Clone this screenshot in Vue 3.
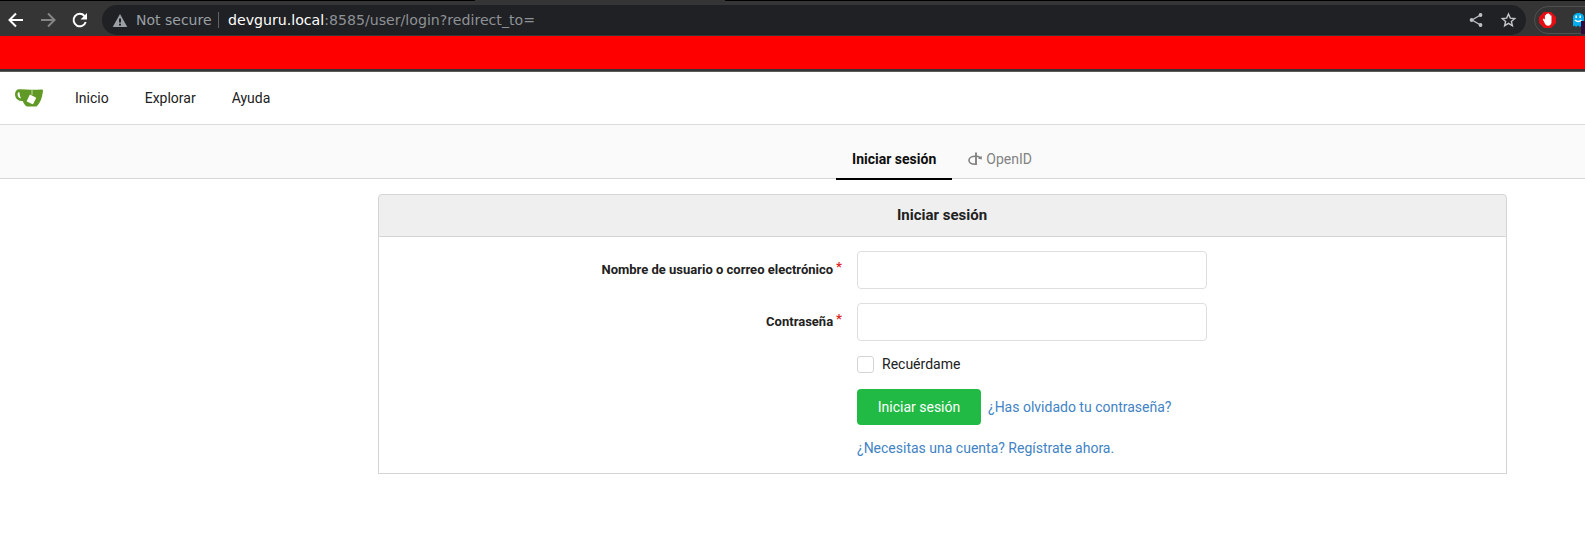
<script setup>
const nav = ['Inicio', 'Explorar', 'Ayuda']
const fields = [
  { id: 'user_name', label: 'Nombre de usuario o correo electrónico', type: 'text' },
  { id: 'password', label: 'Contraseña', type: 'password' },
]
</script>

<template>
  <div class="window">
    <div class="tabstrip"></div>
    <div class="toolbar">
      <svg class="nav-icons" width="102" height="34" viewBox="0 2 102 34" fill="none" stroke-width="2">
        <path d="M23 20H10M16 13.500L9.500 20l6.500 6.500" stroke="#fff" />
        <path d="M41 20H54M48 13.500L54.500 20L48 26.500" stroke="#858585" />
        <path d="M84.500 16A6.200 6.200 0 1 0 85.700 22" stroke="#fff" />
        <path d="M87 13v6.500h-6.500z" fill="#fff" />
      </svg>
      <div class="address">
        <svg class="warn" width="16" height="15" viewBox="0 0 16 15">
          <path d="M8 1L15.300 14H.7z" fill="#9aa0a6" />
          <path d="M7 5.500h2V9.500H7zM7 10.700h2v1.800H7z" fill="#202124" />
        </svg>
        <span class="insecure">Not secure</span>
        <span class="divider"></span>
        <span class="url"><b>devguru.local</b>:8585/user/login?redirect_to=</span>
        <svg class="page-actions" width="48" height="16" viewBox="0 0 48 16">
          <path d="M11.500 3L3 8l8.500 5" fill="none" stroke="#bdc1c6" stroke-width="1.300" />
          <circle cx="11.500" cy="3" r="1.900" fill="#bdc1c6" />
          <circle cx="2.600" cy="8" r="1.900" fill="#bdc1c6" />
          <circle cx="11.500" cy="13" r="1.900" fill="#bdc1c6" />
          <path d="M39.500 2l1.800 4.100 4.400.4-3.300 2.900 1 4.300-3.900-2.300-3.900 2.300 1-4.300-3.300-2.900 4.400-.4z" fill="none" stroke="#c4c7ca" stroke-width="1.400" />
        </svg>
      </div>
      <div class="extensions">
        <svg width="51" height="28" viewBox="0 0 51 28">
          <path d="M10 6h7l5 5v6l-5 5h-7l-5-5v-6z" fill="#e40d13" />
          <path d="M10.200 16l-1.500-2.600 1-.8 1.200 1V9.300h1.200V8h1.400v-.8h1.300V8.200h1.400v1.400h1.300v6.400c0 2-1 3.700-3.400 3.700-2 0-2.900-1.200-3.900-3.700z" fill="#fff" />
          <path d="M39 20.500V11.500c0-6 11-6 11 0v9l-2-1.500-2 2-2-1.500-2 1.500-1.500-1.500z" fill="#00aef0" />
          <path d="M42.200 9.500v2.500M46.200 9.500v2.500M41 14q3.200 3 6.500 0" fill="none" stroke="#fff" stroke-width="1.500" />
          <path d="M47 15h4v13h-4z" fill="#310b3d" />
        </svg>
      </div>
    </div>
    <div class="banner"></div>

    <nav class="navbar">
      <svg class="logo" width="28" height="18" viewBox="0 0 28 18">
        <path fill="#609926" fill-rule="evenodd" d="M3.500.3C1.200.8-.2 3 .1 6c.4 4 3.300 6 7.600 6 1 2.400 2.300 4.400 4 5.500h9.800C25 15 27.500 8 28 1.300 28 .5 27.500.3 26.500.4 19 1 12 .9 5.500.3zM4.300 3c.3 2.600.9 4.800 1.800 6.500C3.800 9 2.600 7.500 2.600 5.300c0-1.300.6-2.200 1.700-2.300z" />
        <path d="M17 .8v5" stroke="#c5dbad" />
        <path d="M14.900 5.600l5.500 2.600c.6.300.8.800.5 1.400l-2.500 5c-.3.600-.8.700-1.400.4l-4.600-2.200c-.6-.3-.7-.8-.4-1.400z" fill="#fff" />
      </svg>
      <a v-for="item in nav" :key="item">{{ item }}</a>
    </nav>

    <div class="tabs">
      <a class="tab active">Iniciar sesión</a>
      <a class="tab">
        <svg width="14" height="14" viewBox="0 0 14 14" fill="none" stroke="#828282">
          <path d="M7.500 4.200C3.500 4.200 1 5.800 1 8.300c0 2.400 2.500 4 6.500 4M8 4.200c1.800 0 3.200.6 4.200 1.300" stroke-width="1.600" />
          <path d="M8 .6v12.400" stroke-width="1.900" />
          <path d="M13.800 4v3.500L9.800 6.500z" fill="#828282" stroke="none" />
        </svg>
        OpenID
      </a>
    </div>

    <main class="card">
      <h4>Iniciar sesión</h4>
      <form class="form" @submit.prevent>
        <div v-for="f in fields" :key="f.id" class="field">
          <label :for="f.id">{{ f.label }}<i>*</i></label>
          <input :id="f.id" :type="f.type" />
        </div>
        <div class="remember"><span class="box"></span>Recuérdame</div>
        <div class="actions">
          <button>Iniciar sesión</button>
          <a>¿Has olvidado tu contraseña?</a>
        </div>
        <div class="register"><a>¿Necesitas una cuenta? Regístrate ahora.</a></div>
      </form>
    </main>
  </div>
</template>

<style>
body { background: #fff; }
</style>

<style scoped>
* { box-sizing: border-box; }
.window {
  width: 1585px;
  height: 539px;
  overflow: hidden;
  background: #fff;
  color: #212121;
  font: 14px/20px Roboto, sans-serif;
}
.tabstrip {
  height: 1px;
  background: linear-gradient(90deg, #000 475px, #353535 475px, #353535 725px, #000 725px);
}
.toolbar {
  display: flex;
  align-items: center;
  height: 35px;
  padding-top: 4px;
  background: #353535;
  overflow: hidden;
}
.nav-icons { flex: none; margin-top: -4px; }
.address {
  flex: none;
  display: flex;
  align-items: center;
  width: 1424px;
  height: 30px;
  margin-top: -1px;
  padding: 0 9px 0 10px;
  border-radius: 15px;
  background: #202124;
  color: #8e9196;
  font: 14.150px/30px "DejaVu Sans", sans-serif;
  white-space: nowrap;
}
.warn { margin-right: 8px; }
.insecure { width: 82px; color: #9aa0a6; font-size: 14px; }
.divider { width: 1px; height: 16px; background: #5f6368; }
.url { margin-left: 9px; }
.url b { color: #fff; font-weight: 400; }
.page-actions { margin-left: auto; }
.extensions {
  flex: none;
  width: 90px;
  height: 28px;
  margin: -1px 0 0 8px;
  border: 1px solid #505050;
  border-radius: 14px;
}
.extensions svg { display: block; margin: -1px 0 0 -1px; }
.banner {
  height: 36px;
  border-bottom: 1px solid #5a5a5a;
  background: linear-gradient(#f00 33px, #353535 33px);
}
.navbar {
  display: flex;
  align-items: center;
  height: 53px;
  padding: 0 15px;
  border-bottom: 1px solid #dbdbdb;
}
.logo { margin-right: 14px; }
.navbar a { padding: 0 18px; }
.tabs {
  display: flex;
  justify-content: center;
  height: 54px;
  padding: 13px 0 0 299px;
  border-bottom: 1px solid #d6d6d7;
  background: #fafafa;
}
.tab {
  display: flex;
  align-items: center;
  gap: 4px;
  height: 42px;
  padding: 0 16px;
  color: #828282;
}
.tab.active {
  padding-top: 2px;
  border-bottom: 2px solid #000;
  color: #0d0d0d;
  font-weight: 700;
}
.card { width: 1129px; margin: 15px 0 0 378px; }
h4 {
  height: 43px;
  margin: 0;
  padding-right: 1px;
  border: 1px solid #d4d4d5;
  border-radius: 4px 4px 0 0;
  background: #efefef;
  font: 700 15px/40px Roboto, sans-serif;
  text-align: center;
}
.form {
  height: 237px;
  padding: 14px 0 0;
  border: 1px solid #d4d4d5;
  border-top: 0;
}
.field { display: flex; height: 38px; margin-bottom: 14px; }
label {
  width: 463px;
  margin-right: 15px;
  font: 700 13px/38px Roboto, sans-serif;
  text-align: right;
}
label i {
  margin-left: 3px;
  color: #db2828;
  font-style: normal;
  vertical-align: 3px;
  line-height: 1;
}
input {
  width: 350px;
  border: 1px solid #dededf;
  border-radius: 4px;
  background: #fff;
}
.remember {
  display: flex;
  align-items: center;
  gap: 8px;
  height: 20px;
  margin: -1px 0 0 478px;
}
.box { width: 17px; height: 17px; border: 1px solid #d4d4d5; border-radius: 3px; }
.actions { display: flex; align-items: center; gap: 7px; margin: 15px 0 0 478px; }
button {
  width: 124px;
  height: 36px;
  padding: 0;
  border: 0;
  border-radius: 4px;
  background: #21ba45;
  color: #fff;
  font: 14px/20px Roboto, sans-serif;
}
.form a { color: #4183c4; }
.register { margin: 13px 0 0 478px; }
</style>
